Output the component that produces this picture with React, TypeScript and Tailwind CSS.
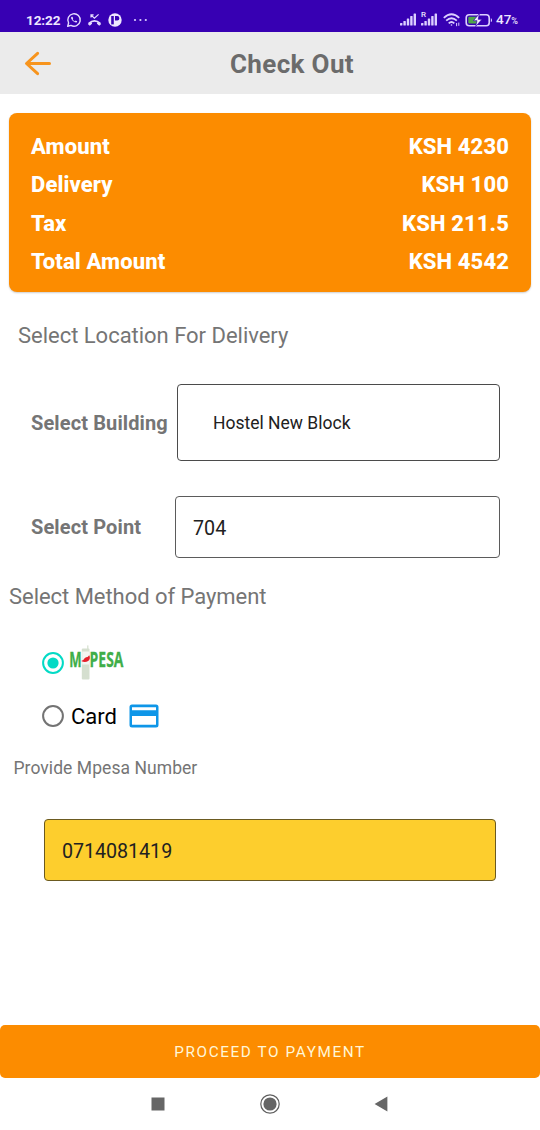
import type { ReactNode } from "react";

const summary = [
  { label: "Amount", value: "KSH 4230" },
  { label: "Delivery", value: "KSH 100" },
  { label: "Tax", value: "KSH 211.5" },
  { label: "Total Amount", value: "KSH 4542" },
];

function SignalBars() {
  return (
    <svg width="17" height="13" viewBox="0 0 17 13" fill="#dccfff">
      <rect x="0" y="10" width="2.4" height="2.5" rx="0.6" />
      <rect x="3.4" y="8" width="2.4" height="4.5" rx="0.6" />
      <rect x="6.8" y="5.5" width="2.4" height="7" rx="0.6" />
      <rect x="10.2" y="3" width="2.4" height="9.5" rx="0.6" />
      <rect x="13.6" y="0.5" width="2.4" height="12" rx="0.6" />
    </svg>
  );
}

function StatusBar() {
  return (
    <div className="flex h-8 items-center bg-[#3700b3] pt-[7px] pl-[26px] text-[#eee6ff]">
      <span className="w-[35px] pt-px text-[13.5px] font-bold tracking-[-0.1px]">12:22</span>
      <svg className="ml-[5px]" width="16" height="16" viewBox="0 0 16 16" fill="none" stroke="#e6dcff">
        <path d="M1.7 14.3 L2.6 11 A6.2 6.2 0 1 1 5 13.4 Z" strokeWidth="1.4" strokeLinejoin="round" />
        <path d="M5.2 4.9 Q4.6 6.2 6.4 8.4 Q8.6 10.8 10.4 10.5 Q11.4 10.1 11.1 9.2 L9.6 8.6 L8.9 9.4 Q7.4 8.8 6.6 7.2 L7.2 6.4 L6.5 4.7 Z" fill="#e6dcff" stroke="none" />
      </svg>
      <svg className="ml-[5px]" width="15" height="14" viewBox="0 0 15 14" fill="none" stroke="#e6dcff">
        <path d="M4 4.6 V1.9 H6.6 M4.2 2.1 L7.4 5.2 L11.6 1.4" strokeWidth="1.2" />
        <path d="M1.8 10.4 Q7.5 5.4 13.2 10.4" strokeWidth="1.8" />
        <path d="M1.2 10.6 L2.8 12 L4.4 10.6 V9.4 M13.8 10.6 L12.2 12 L10.6 10.6 V9.4" strokeWidth="1.2" fill="#e6dcff" />
      </svg>
      <svg className="ml-[6px]" width="14" height="14" viewBox="0 0 14 14">
        <circle cx="7" cy="7" r="6.7" fill="#eee6ff" />
        <path d="M3.2 3 H5.8 V11.4 H3.2 Z" fill="#3700b3" />
        <path d="M7 3 H9.2 A2.2 2.2 0 0 1 9.2 7.4 H7 Z" fill="#3700b3" />
      </svg>
      <svg className="ml-[11px]" width="15" height="4" viewBox="0 0 15 4" fill="#dccfff">
        <circle cx="2" cy="2" r="1.1" />
        <circle cx="7.4" cy="2" r="1.1" />
        <circle cx="12.8" cy="2" r="1.1" />
      </svg>
      <div className="ml-auto flex items-center pr-[22px]">
        <SignalBars />
        <span className="relative ml-[4px]">
          <SignalBars />
          <span className="absolute -top-[3px] left-0 bg-[#3700b3] text-[8px] leading-[9px] font-medium">R</span>
        </span>
        <svg className="ml-[5px]" width="18" height="14" viewBox="0 0 18 14" fill="none" stroke="#dccfff" strokeWidth="1.8">
          <path d="M0.8 4.8 Q8.5 -2.4 16.2 4.8" />
          <path d="M3.2 7.7 Q8.5 2.8 13.8 7.7" />
          <path d="M5.7 10.3 Q8.5 7.8 11.3 10.3" />
          <circle cx="8.5" cy="12" r="0.8" fill="#dccfff" stroke="none" />
          <path d="M13.6 10 V13.2 M15.8 9.6 V12.8" strokeWidth="1" />
        </svg>
        <svg className="ml-[4px]" width="28" height="14" viewBox="0 0 28 14">
          <rect x="1.2" y="1.7" width="23" height="11" rx="3" fill="none" stroke="#dccfff" strokeWidth="1.6" />
          <rect x="3.3" y="3.8" width="9" height="6.8" rx="1" fill="#4fa64a" />
          <path d="M25.8 5.2 Q27 5.3 27 7.2 Q27 9 25.8 9.1 Z" fill="#dccfff" />
          <path d="M14.5 0.5 L8.4 7.7 H12 L10.6 13.6 L17 6.3 H13.2 Z" fill="#f5efff" stroke="#3700b3" strokeWidth="0.7" />
        </svg>
        <span className="ml-[3px] flex items-baseline pt-px text-[13.5px] leading-4 font-medium">
          47<span className="text-[9px]">%</span>
        </span>
      </div>
    </div>
  );
}

function Radio({ checked }: { checked: boolean }) {
  return (
    <svg className="mb-px" width="22" height="22" viewBox="0 0 22 22" fill="none">
      <circle cx="11" cy="11" r="9.9" stroke={checked ? "#03dac5" : "#737373"} strokeWidth="2" />
      {checked && <circle cx="11" cy="11" r="5.6" fill="#03dac5" />}
    </svg>
  );
}

function MpesaLogo() {
  return (
    <svg className="overflow-visible" width="60" height="36" viewBox="0 0 60 36">
      <rect x="18" y="0.4" width="1.5" height="5" fill="#dde6d8" />
      <rect x="12.8" y="3.5" width="7.7" height="31" rx="1" fill="#d5dfcf" />
      <rect x="13.2" y="6.5" width="7" height="13" fill="#f4f5f2" />
      <g fill="#3fae49" stroke="#3fae49" strokeWidth="0.3" fontFamily="'Open Sans', 'Liberation Sans', sans-serif" fontWeight="700" fontSize="20.5">
        <text x="0.3" y="22" textLength="12.4" lengthAdjust="spacingAndGlyphs">M</text>
        <text x="20.6" y="22" textLength="33.8" lengthAdjust="spacingAndGlyphs">PESA</text>
      </g>
      <path d="M12.2 16 Q14.6 15.2 15.6 13.2 Q17 12 18.6 12 L20.2 10.2 Q22 13.4 19.2 15.9 Q16 18 12.2 16 Z" fill="#e51f2b" />
    </svg>
  );
}

function FormRow({ label, children, className }: { label: string; children: ReactNode; className: string }) {
  return (
    <div className={`flex items-center pr-10 pl-[31px] ${className}`}>
      <span className="text-[20px] leading-6 font-bold tracking-[0.12px] whitespace-nowrap text-[#757575]">{label}</span>
      {children}
    </div>
  );
}

export default function App() {
  return (
    <div className="flex h-[1130px] w-[540px] flex-col overflow-hidden bg-white font-['Roboto','Liberation_Sans',sans-serif]">
      <StatusBar />

      <header className="flex h-[62px] items-center bg-[#ebebeb] pl-[24px]">
        <svg width="28" height="26" viewBox="0 0 28 26" fill="none" stroke="#f7941d" strokeWidth="3" strokeLinecap="round" strokeLinejoin="round">
          <path d="M13.6 3.3 L2.5 13.5 L13.6 23.7 M3 13.5 H25.5" />
        </svg>
        <h1 className="ml-[178px] pt-[2px] text-[26px] font-bold tracking-[0.35px] text-[#6b6b6b]">Check Out</h1>
      </header>

      <main className="flex flex-1 flex-col">
        <section className="mx-[9px] mt-[19px] flex h-[179px] flex-col rounded-lg bg-[#fc8c00] pt-[14px] pr-[22px] pl-[22px] shadow-[0_1px_2px_rgba(0,0,0,0.2)]">
          {summary.map((row) => (
            <div key={row.label} className="flex h-[38.5px] items-center justify-between text-[22px] font-extrabold tracking-[0.12px] text-white">
              <span>{row.label}</span>
              <span>{row.value}</span>
            </div>
          ))}
        </section>

        <h2 className="mt-[28px] pl-[18px] text-[22px] leading-8 tracking-[-0.02px] text-[#757575]">Select Location For Delivery</h2>

        <FormRow label="Select Building" className="mt-[32px] h-[77px]">
          <div className="ml-auto flex h-[77px] w-[323px] items-center rounded border border-[#4b4b4b] pt-[2px] pl-[35px] text-[17.5px] text-[#212121]">
            Hostel New Block
          </div>
        </FormRow>
        <FormRow label="Select Point" className="mt-[35px] h-[62px]">
          <div className="ml-auto flex h-[62px] w-[325px] items-center rounded border border-[#5b5b5b] pt-[3px] pl-[17px] text-[19.7px] leading-6 text-[#212121]">
            704
          </div>
        </FormRow>

        <h2 className="mt-[23px] pl-[9px] text-[22px] leading-8 tracking-[-0.04px] text-[#757575]">Select Method of Payment</h2>

        <div className="mt-[32px] flex h-9 items-center pl-[42px]">
          <Radio checked />
          <span className="ml-[5px]">
            <MpesaLogo />
          </span>
        </div>
        <div className="mt-[17px] flex h-9 items-center pl-[42px]">
          <Radio checked={false} />
          <span className="ml-[7px] w-[58px] text-[22px] text-black">Card</span>
          <svg className="mb-px" width="30" height="24" viewBox="0 0 30 24">
            <path fillRule="evenodd" fill="#0e96e8" d="M3 0.5 H27 Q29.5 0.5 29.5 3 V21 Q29.5 23.5 27 23.5 H3 Q0.5 23.5 0.5 21 V3 Q0.5 0.5 3 0.5 Z M3 3.3 V6.3 H27 V3.3 Z M3 12 V20.7 H27 V12 Z" />
          </svg>
        </div>

        <p className="mt-[22px] pl-[13.5px] text-[17.5px] leading-6 tracking-[0.06px] text-[#757575]">Provide Mpesa Number</p>
        <div className="mx-[44px] mt-[39px] flex h-[62px] items-center rounded border border-[#6b5a20] bg-[#fdce2d] pt-[3px] pl-[17px] text-[19.7px] leading-6 tracking-[-0.05px] text-[#212121]">
          0714081419
        </div>
      </main>

      <button className="h-[53px] rounded-[5px] bg-[#fc8c00] pt-[2px] text-[15.3px] tracking-[1.6px] text-[#fff6d8]">
        PROCEED TO PAYMENT
      </button>
      <nav className="flex h-[52px] items-center justify-between pr-[152px] pl-[151px]">
        <svg width="14" height="14" viewBox="0 0 14 14">
          <rect x="0.5" y="0.5" width="13" height="13" fill="#666" />
        </svg>
        <svg width="20" height="20" viewBox="0 0 20 20">
          <circle cx="10" cy="10" r="9.2" fill="none" stroke="#5f5f5f" strokeWidth="1.2" />
          <circle cx="10" cy="10" r="6.6" fill="#666" />
        </svg>
        <svg width="14" height="16" viewBox="0 0 14 16">
          <path d="M0.6 8 L13.4 0.6 V15.4 Z" fill="#666" />
        </svg>
      </nav>
    </div>
  );
}
